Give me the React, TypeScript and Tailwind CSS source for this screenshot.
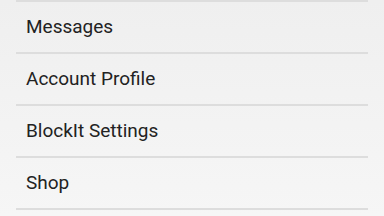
import React from "react";

const items = ["Messages", "Account Profile", "BlockIt Settings", "Shop"];

export default function App() {
  return (
    <div className="w-[384px] h-[216px] overflow-hidden bg-gradient-to-b from-[#efefef] to-[#f6f6f6]" style={{ fontFamily: "Roboto, 'Liberation Sans', sans-serif" }}>
      <div className="ml-4 mr-4 border-t-2 border-[#dddddd]">
        {items.map((t) => (
          <div key={t} className="h-[52px] border-b-2 border-[#dddddd] flex items-center pl-[10px] text-[19px] text-[#222222]">
            {t}
          </div>
        ))}
      </div>
    </div>
  );
}
